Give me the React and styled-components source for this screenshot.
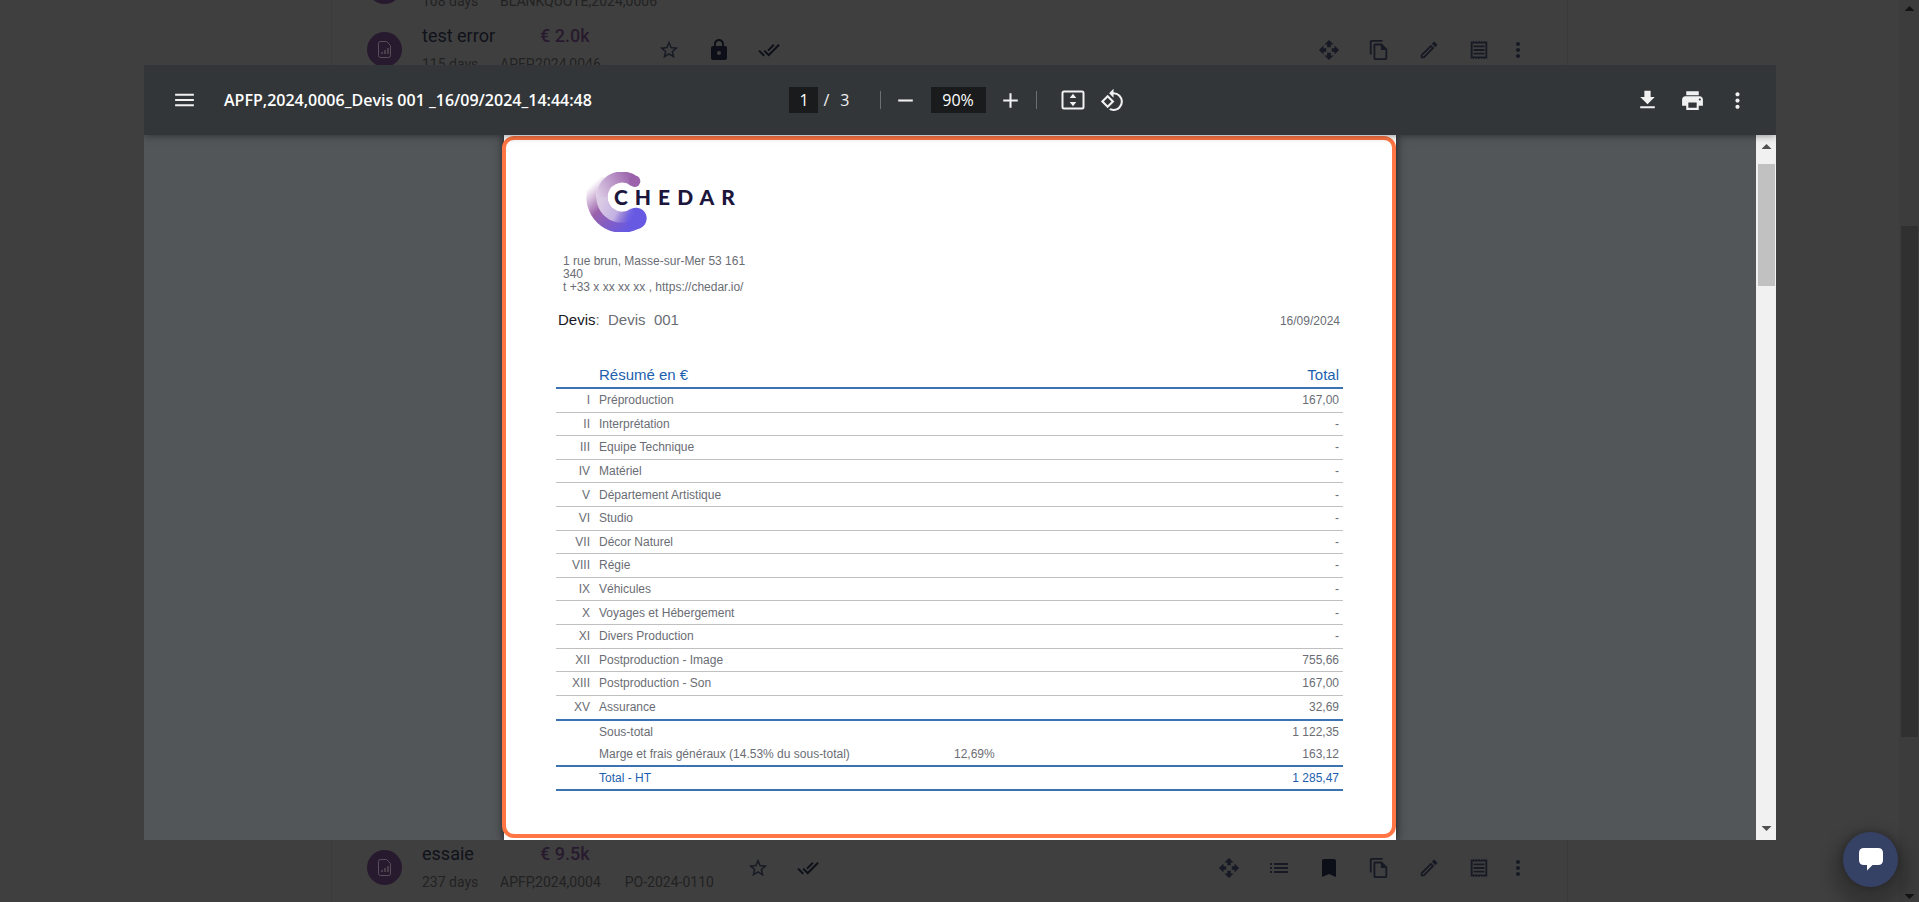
import React, { Component } from 'react';
import styled, { createGlobalStyle } from 'styled-components';
import {
  MdBookmark, MdDoneAll, MdList, MdLock, MdMenu, MdMoreVert,
  MdOpenWith, MdOutlineEdit, MdOutlineFileCopy, MdOutlineReceipt, MdPrint,
  MdRotate90DegreesCcw, MdStarBorder, MdAdd, MdRemove,
} from 'react-icons/md';

const GlobalStyle = createGlobalStyle`
  * {
    box-sizing: border-box;
  }

  body {
    margin: 0;
    overflow: hidden;
    background: #3f3f3f;
  }

  button {
    padding: 0;
    border: 0;
    background: none;
    color: inherit;
    cursor: pointer;
  }
`;

const Screen = styled.div`
  display: flex;
  height: 100vh;
  overflow: hidden;
  background: #3f3f3f;
  font-family: Roboto, sans-serif;
`;

// list of quotes, dimmed behind the viewer
const QuoteList = styled.main`
  flex: 1;
  display: flex;
  flex-direction: column;
  justify-content: space-between;
  max-width: 1237px;
  margin: 0 auto;
  border-left: 1px solid #3a3a3a;
  border-right: 1px solid #3a3a3a;
`;

const Rows = styled.div`
  margin-top: ${p => (p.$scrolled ? '-45px' : '0')};
  padding-bottom: 3px;
`;

const Row = styled.div`
  display: flex;
  align-items: center;
  height: 63px;
  padding: 0 35px;
  color: #141821;
`;

const Avatar = styled.div`
  display: flex;
  align-items: center;
  justify-content: center;
  width: 35px;
  height: 35px;
  margin-right: 20px;
  border-radius: 50%;
  background: #281a2e;
`;

const Info = styled.div`
  display: grid;
  grid-template-columns: 78px 40px auto auto;
  row-gap: 8px;
  margin-right: 19px;
`;

const Name = styled.div`
  grid-column: 1 / 3;
  font-size: 18px;
  line-height: 21px;
  color: #10121a;
`;

const Amount = styled.div`
  grid-column: 3 / 5;
  font-size: 18px;
  font-weight: 500;
  line-height: 21px;
  color: #281a2e;
`;

const Days = styled.div`
  font-size: 14px;
  line-height: 20px;
  color: #222;
`;

const Refs = styled.div`
  grid-column: 2 / 5;
  display: flex;
  gap: 24px;
  font-size: 14px;
  line-height: 20px;
  color: #222;
`;

const Actions = styled.div`
  display: flex;
  margin-left: ${p => (p.$end ? 'auto' : '0')};
`;

const RowButton = styled.button`
  display: flex;
  align-items: center;
  justify-content: center;
  width: ${p => (p.$narrow ? '28px' : '50px')};
  height: 40px;
  font-size: ${p => (p.$small ? '22px' : '24px')};
  color: ${p => (p.$solid ? '#0d0f18' : '#171a24')};
`;

const Scrollbar = styled.div`
  display: flex;
  flex-direction: column;
  flex: none;
  width: 20px;
  padding: ${p => (p.$dim ? '6px 0 3px' : '9px 0')};
  background: ${p => (p.$dim ? '#3c3c3c' : '#f1f1f1')};
`;

const Arrow = styled.div`
  align-self: center;
  width: 10px;
  height: 5px;
  margin-left: 1px;
  background: ${p => (p.$dim ? '#141414' : '#505050')};
  clip-path: ${p => (p.$down ? 'polygon(0 0, 100% 0, 50% 100%)' : 'polygon(50% 0, 100% 100%, 0 100%)')};
`;

const Track = styled.div`
  flex: 1;
  padding-top: ${p => (p.$dim ? '215px' : '15px')};
`;

const Thumb = styled.div`
  width: 17px;
  height: ${p => (p.$dim ? '511px' : '122px')};
  margin-left: 2px;
  background: ${p => (p.$dim ? '#303030' : '#c1c1c1')};
`;

const Overlay = styled.div`
  position: fixed;
  inset: 0;
  display: flex;
  padding: 65px 143px 62px 144px;
`;

const Viewer = styled.section`
  flex: 1;
  display: flex;
  flex-direction: column;
  min-width: 0;
  overflow: hidden;
  background: #525659;
`;

const Toolbar = styled.header`
  position: relative;
  z-index: 1;
  flex: none;
  display: grid;
  grid-template-columns: 1fr auto 1fr;
  align-items: center;
  height: 70px;
  padding: 0 26px 0 28px;
  background: #323639;
  box-shadow: 0 0 8px rgba(0, 0, 0, 0.5);
  color: #f1f1f1;
  font-family: "Open Sans", sans-serif;
  font-size: 16px;
`;

const ToolGroup = styled.div`
  display: flex;
  align-items: center;
  justify-content: ${p => (p.$end ? 'flex-end' : 'flex-start')};
  gap: ${p => (p.$end ? '20px' : '0')};
`;

const ToolButton = styled.button`
  display: flex;
  align-items: center;
  justify-content: center;
  width: ${p => p.$width || 25}px;
  height: 40px;
  font-size: ${p => p.$size || 25}px;
`;

const FileName = styled.h1`
  margin: 0 0 0 27px;
  font-size: 16px;
  font-weight: 600;
  line-height: 24px;
  white-space: nowrap;
  color: #fff;
`;

const ToolInput = styled.input`
  width: ${p => (p.$wide ? '55px' : '29px')};
  height: 26px;
  padding: 0;
  border: 0;
  background: #191b1c;
  color: #fff;
  font: inherit;
  text-align: center;
`;

const PageCount = styled.span`
  display: flex;
  gap: 11px;
  margin: 0 30px 0 5px;
`;

const Divider = styled.span`
  width: 1px;
  height: 18px;
  margin-right: ${p => (p.$last ? '16px' : '0')};
  background: #6d7072;
`;

const Canvas = styled.div`
  flex: 1;
  display: flex;
  min-height: 0;
`;

const Stage = styled.div`
  flex: 1;
  display: flex;
  justify-content: center;
  overflow: hidden;
`;

const Sheet = styled.article`
  position: relative;
  width: 892px;
  padding: 37px 53px 0 52px;
  background: #fff;
  box-shadow: 0 0 9px rgba(0, 0, 0, 0.7);
  color: #6a6d74;
  font-family: "Liberation Sans", Arial, sans-serif;
  font-size: 12px;
`;

const Highlight = styled.div`
  position: absolute;
  inset: 1px 0 2px -2px;
  border: 4px solid #ff7543;
  border-radius: 12px;
  pointer-events: none;
`;

const Brand = styled.div`
  display: flex;
  align-items: flex-start;
  height: 60px;
  margin-left: 30px;
`;

const BrandName = styled.span`
  z-index: 1;
  margin: 11px 0 0 -33px;
  font-family: Lato, sans-serif;
  font-size: 21px;
  font-weight: 900;
  line-height: 28px;
  letter-spacing: 7px;
  color: #1c163c;
`;

const Address = styled.address`
  margin: 23px 0 0 7px;
  font-style: normal;
  line-height: 13px;
`;

const TitleLine = styled.div`
  display: flex;
  align-items: baseline;
  justify-content: space-between;
  margin: 16px 3px 31px 2px;
  line-height: 20px;
`;

const DocTitle = styled.h2`
  margin: 0;
  font-size: 15px;
  font-weight: 400;
  white-space: pre;

  b {
    font-weight: 400;
    color: #17181f;
  }
`;

const Table = styled.table`
  width: 100%;
  border-collapse: separate;
  border-spacing: 0;
  table-layout: fixed;
  line-height: 14px;

  th, td {
    padding: 0;
    font-weight: 400;
    text-align: left;
    white-space: nowrap;
  }

  th:first-child, td:first-child {
    padding-right: 9px;
    text-align: right;
  }

  th:last-child, td:last-child {
    padding-right: 4px;
    text-align: right;
  }

  thead th {
    height: 27px;
    border-bottom: 2px solid #3a72b4;
    font-size: 15px;
    color: #1d5fae;
  }
`;

const Categories = styled.tbody`
  height: 332px;

  td {
    border-bottom: 1px solid #c0c0c0;
  }

  tr:last-child td {
    border-bottom: 2px solid #3a72b4;
  }
`;

const Totals = styled.tbody`
  td {
    height: 22px;
  }

  tr:nth-child(2) td, tr:last-child td {
    height: 24px;
    border-bottom: 2px solid #3a72b4;
  }

  tr:last-child td {
    color: #1d5fae;
  }
`;

const ChatButton = styled.button`
  position: fixed;
  right: 21px;
  bottom: 15px;
  display: flex;
  align-items: center;
  justify-content: center;
  width: 55px;
  height: 55px;
  border-radius: 50%;
  background: #364166;
  box-shadow: 0 1px 8px rgba(0, 0, 0, 0.3), 0 10px 14px 12px rgba(0, 0, 0, 0.18);
`;

const topQuotes = [
  { name: 'BLANK', amount: '€ 0.0k', days: '108 days', refs: ['BLANKQUOTE,2024,0006'] },
  { name: 'test error', amount: '€ 2.0k', days: '115 days', refs: ['APFP,2024,0046', ''], locked: true },
];

const bottomQuotes = [
  { name: 'essaie', amount: '€ 9.5k', days: '237 days', refs: ['APFP,2024,0004', 'PO-2024-0110'], ordered: true },
];

const categories = [
  ['I', 'Préproduction', '167,00'],
  ['II', 'Interprétation', '-'],
  ['III', 'Equipe Technique', '-'],
  ['IV', 'Matériel', '-'],
  ['V', 'Département Artistique', '-'],
  ['VI', 'Studio', '-'],
  ['VII', 'Décor Naturel', '-'],
  ['VIII', 'Régie', '-'],
  ['IX', 'Véhicules', '-'],
  ['X', 'Voyages et Hébergement', '-'],
  ['XI', 'Divers Production', '-'],
  ['XII', 'Postproduction - Image', '755,66'],
  ['XIII', 'Postproduction - Son', '167,00'],
  ['XV', 'Assurance', '32,69'],
];

const totals = [
  ['Sous-total', '', '1 122,35'],
  ['Marge et frais généraux (14.53% du sous-total)', '12,69%', '163,12'],
  ['Total - HT', '', '1 285,47'],
];

const QuoteIcon = () => (
  <svg width="16" height="19" viewBox="0 0 16 19" fill="none" stroke="#565059" strokeWidth="1">
    <path d="M3.5 1.5h6l4 4v10a2 2 0 0 1-2 2h-8a2 2 0 0 1-2-2v-12a2 2 0 0 1 2-2z" />
    <path d="M5 14v-2M8 14v-4M11 14V8" strokeWidth="1.4" />
  </svg>
);

const DownloadIcon = () => (
  <svg width="26" height="26" viewBox="0 0 24 24" fill="currentColor">
    <path d="M19 9h-4V3H9v6H5l7 7 7-7zM5 18v2h14v-2H5z" />
  </svg>
);

const FitIcon = () => (
  <svg width="24" height="20" viewBox="0 0 24 20" fill="none">
    <rect x="1.5" y="1.5" width="21" height="17" rx="1.5" stroke="currentColor" strokeWidth="2" />
    <path d="M12 3.8l3.3 4.2H8.7zM12 16.2l3.3-4.2H8.7z" fill="currentColor" />
  </svg>
);

const ChatIcon = () => (
  <svg width="24" height="23" viewBox="0 0 24 23" fill="#fff">
    <path d="M5 0h14q5 0 5 5v7q0 5-5 5h-5.5q-2.5 2.5-5.5 5.500V17H5q-5 0-5-5V5q0-5 5-5z" />
  </svg>
);

const BrandMark = () => (
  <svg width="61" height="60" viewBox="47 37 183 180" fill="none">
    <defs>
      <linearGradient id="outer" gradientUnits="userSpaceOnUse" x1="60" y1="35" x2="205" y2="195">
        <stop offset="0.15" stopColor="#9b62ab" stopOpacity="0" />
        <stop offset="0.48" stopColor="#9b62ab" />
        <stop offset="0.95" stopColor="#6759e2" />
      </linearGradient>
      <linearGradient id="upper" gradientUnits="userSpaceOnUse" x1="205" y1="60" x2="90" y2="120">
        <stop offset="0.1" stopColor="#9b62ab" />
        <stop offset="1" stopColor="#dccbe5" />
      </linearGradient>
      <linearGradient id="lower" gradientUnits="userSpaceOnUse" x1="95" y1="113" x2="200" y2="165">
        <stop offset="0" stopColor="#dccbe5" />
        <stop offset="0.5" stopColor="#c3b2e2" />
        <stop offset="1" stopColor="#6759e2" stopOpacity="0" />
      </linearGradient>
    </defs>
    <path d="M104 57A75 75 0 0 0 80 112A75 75 0 0 0 196 175" stroke="url(#outer)" strokeWidth="64" />
    <circle cx="197" cy="176" r="32" fill="#6759e2" />
    <circle cx="155" cy="113" r="43" fill="#fff" />
    <path d="M155 53A60 60 0 0 0 95 113" stroke="#fff" strokeWidth="34" />
    <path d="M193 66A60 60 0 0 0 95 114" stroke="url(#upper)" strokeWidth="34" />
    <circle cx="193" cy="65" r="17" fill="#9b62ab" />
    <path d="M95 113A60 60 0 0 0 193 159" stroke="url(#lower)" strokeWidth="34" />
  </svg>
);

const ScrollRail = ({ dim }) => (
  <Scrollbar $dim={dim} aria-hidden="true">
    <Arrow $dim={dim} />
    <Track $dim={dim}><Thumb $dim={dim} /></Track>
    <Arrow $dim={dim} $down />
  </Scrollbar>
);

const QuoteRow = ({ quote }) => (
  <Row>
    <Avatar><QuoteIcon /></Avatar>
    <Info>
      <Name>{quote.name}</Name>
      <Amount>{quote.amount}</Amount>
      <Days>{quote.days}</Days>
      <Refs>{quote.refs.map(ref => <span key={ref}>{ref}</span>)}</Refs>
    </Info>
    <Actions>
      <RowButton $small aria-label="Favourite"><MdStarBorder /></RowButton>
      {quote.locked && <RowButton $solid aria-label="Locked"><MdLock /></RowButton>}
      <RowButton $small $solid aria-label="Validate"><MdDoneAll /></RowButton>
    </Actions>
    <Actions $end>
      <RowButton $small aria-label="Move"><MdOpenWith /></RowButton>
      {quote.ordered && <RowButton aria-label="Details"><MdList /></RowButton>}
      {quote.ordered && <RowButton $solid aria-label="Bookmark"><MdBookmark /></RowButton>}
      <RowButton $small aria-label="Copy"><MdOutlineFileCopy /></RowButton>
      <RowButton $small aria-label="Edit"><MdOutlineEdit /></RowButton>
      <RowButton $small aria-label="Receipt"><MdOutlineReceipt /></RowButton>
      <RowButton $narrow aria-label="More"><MdMoreVert /></RowButton>
    </Actions>
  </Row>
);

class App extends Component {
  constructor(props) {
    super(props);
    this.state = {
      page: '1',
      zoom: '90%',
    };
  }

  render() {
    const { page, zoom } = this.state;

    return (
      <>
        <GlobalStyle />
        <Screen>
          <QuoteList>
            <Rows $scrolled>
              {topQuotes.map(quote => <QuoteRow quote={quote} key={quote.days} />)}
            </Rows>
            <Rows>
              {bottomQuotes.map(quote => <QuoteRow quote={quote} key={quote.days} />)}
            </Rows>
          </QuoteList>
          <ScrollRail dim />
        </Screen>

        <Overlay>
          <Viewer>
            <Toolbar>
              <ToolGroup>
                <ToolButton $size={28} aria-label="Menu"><MdMenu /></ToolButton>
                <FileName>APFP,2024,0006_Devis 001 _16/09/2024_14:44:48</FileName>
              </ToolGroup>
              <ToolGroup>
                <ToolInput aria-label="Page" value={page} onChange={e => this.setState({ page: e.target.value })} />
                <PageCount><span>/</span><span>3</span></PageCount>
                <Divider />
                <ToolButton $width={50} aria-label="Zoom out"><MdRemove /></ToolButton>
                <ToolInput $wide aria-label="Zoom" value={zoom} onChange={e => this.setState({ zoom: e.target.value })} />
                <ToolButton $width={50} aria-label="Zoom in"><MdAdd /></ToolButton>
                <Divider $last />
                <ToolButton $width={40} aria-label="Fit to page"><FitIcon /></ToolButton>
                <ToolButton $width={40} aria-label="Rotate"><MdRotate90DegreesCcw /></ToolButton>
              </ToolGroup>
              <ToolGroup $end>
                <ToolButton aria-label="Download"><DownloadIcon /></ToolButton>
                <ToolButton aria-label="Print"><MdPrint /></ToolButton>
                <ToolButton aria-label="More"><MdMoreVert /></ToolButton>
              </ToolGroup>
            </Toolbar>

            <Canvas>
              <Stage>
                <Sheet>
                  <Brand>
                    <BrandMark />
                    <BrandName>CHEDAR</BrandName>
                  </Brand>
                  <Address>
                    1 rue brun, Masse-sur-Mer 53 161<br />
                    340<br />
                    t +33 x xx xx xx , https://chedar.io/
                  </Address>
                  <TitleLine>
                    <DocTitle><b>Devis</b>:{'  '}Devis{'  '}001</DocTitle>
                    <time>16/09/2024</time>
                  </TitleLine>
                  <Table>
                    <colgroup>
                      <col style={{ width: 43 }} />
                      <col />
                      <col style={{ width: 200 }} />
                      <col style={{ width: 189 }} />
                    </colgroup>
                    <thead>
                      <tr>
                        <th />
                        <th>Résumé en €</th>
                        <th />
                        <th>Total</th>
                      </tr>
                    </thead>
                    <Categories>
                      {categories.map(([number, label, total]) => (
                        <tr key={number}>
                          <td>{number}</td>
                          <td>{label}</td>
                          <td />
                          <td>{total}</td>
                        </tr>
                      ))}
                    </Categories>
                    <Totals>
                      {totals.map(([label, rate, total]) => (
                        <tr key={label}>
                          <td />
                          <td>{label}</td>
                          <td>{rate}</td>
                          <td>{total}</td>
                        </tr>
                      ))}
                    </Totals>
                  </Table>
                  <Highlight />
                </Sheet>
              </Stage>
              <ScrollRail />
            </Canvas>
          </Viewer>
        </Overlay>

        <ChatButton aria-label="Open chat"><ChatIcon /></ChatButton>
      </>
    );
  }
}

export default App;
